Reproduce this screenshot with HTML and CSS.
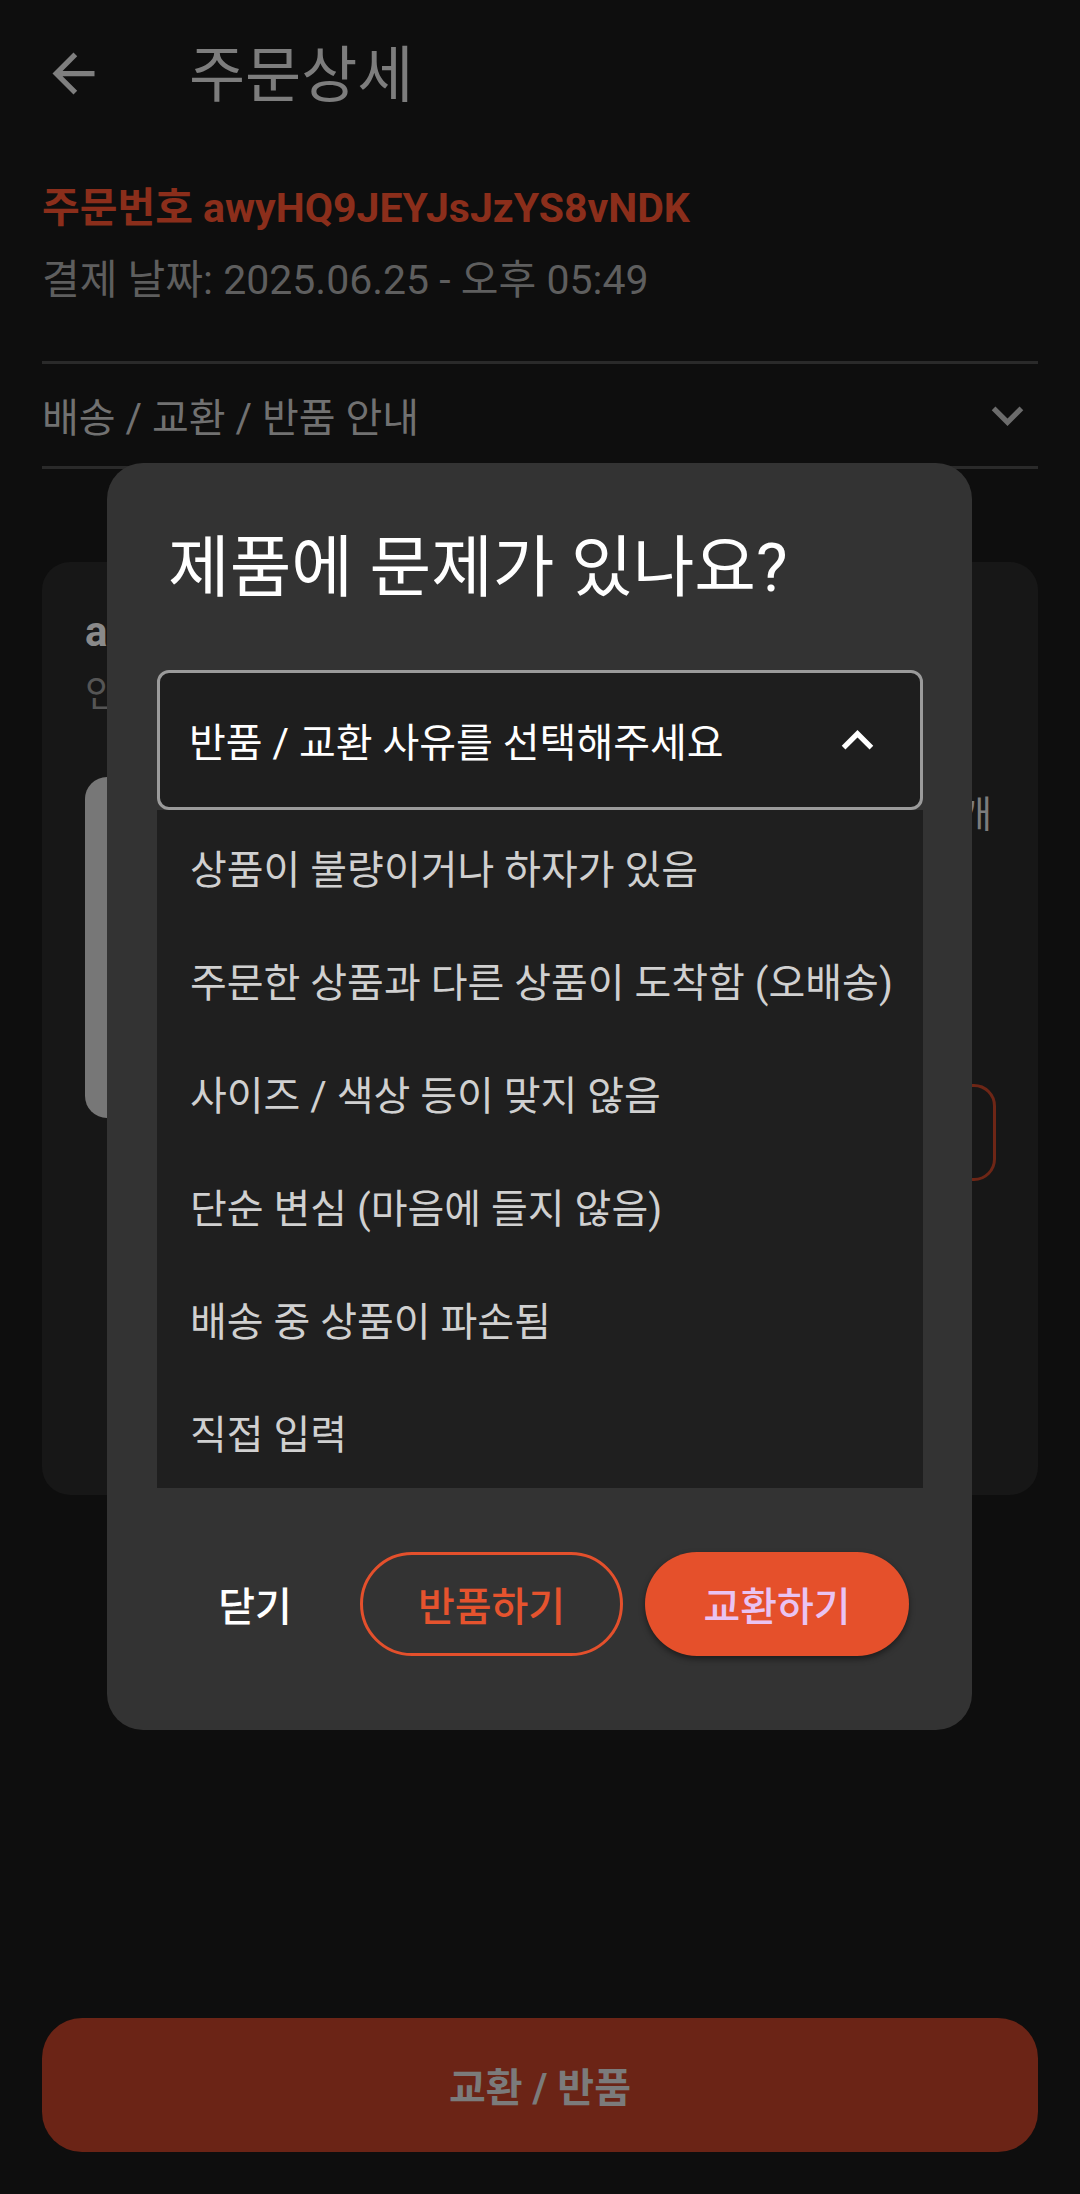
FILE: index.html
```html
<!DOCTYPE html>
<html lang="ko">
<head>
<meta charset="utf-8">
<title>주문상세</title>
<link rel="stylesheet" href="styles.css">
</head>
<body>
<div class="screen">
  <header class="appbar">
    <span class="icon-btn">
      <svg viewBox="0 0 24 24" width="63" height="63"><path fill="#7f7f7f" d="M20 11H7.83l5.59-5.59L12 4l-8 8 8 8 1.41-1.41L7.83 13H20v-2z"/></svg>
    </span>
    <h1 class="appbar-title">주문상세</h1>
  </header>

  <section class="order-info">
    <p class="order-no">주문번호 awyHQ9JEYJsJzYS8vNDK</p>
    <p class="order-date">결제 날짜: 2025.06.25 - 오후 05:49</p>
  </section>

  <div class="accordion">
    <span>배송 / 교환 / 반품 안내</span>
    <svg viewBox="0 0 24 24" width="63" height="63"><path fill="#6c6c6c" d="M16.59 8.59L12 13.17 7.41 8.59 6 10l6 6 6-6z"/></svg>
  </div>

  <article class="product-card">
    <p class="card-name">awyHQ9JEYJsJzYS8vNDK</p>
    <p class="card-sub">인기 상품</p>
    <div class="card-body">
      <div class="thumb"></div>
      <div class="card-info">
        <p class="qty">수량 1개</p>
        <span class="card-btn">교환 / 반품</span>
      </div>
    </div>
  </article>

  <button class="bottom-btn">교환 / 반품</button>
</div>

<div class="dialog">
  <h2 class="dialog-title">제품에 문제가 있나요?</h2>
  <div class="select">
    <span>반품 / 교환 사유를 선택해주세요</span>
    <svg viewBox="0 0 24 24" width="63" height="63"><path fill="#ffffff" d="M12 8l-6 6 1.41 1.41L12 10.83l4.59 4.58L18 14z"/></svg>
  </div>
  <ul class="menu">
    <li>상품이 불량이거나 하자가 있음</li>
    <li>주문한 상품과 다른 상품이 도착함 (오배송)</li>
    <li>사이즈 / 색상 등이 맞지 않음</li>
    <li>단순 변심 (마음에 들지 않음)</li>
    <li>배송 중 상품이 파손됨</li>
    <li>직접 입력</li>
  </ul>
  <div class="actions">
    <button class="btn btn-text">닫기</button>
    <button class="btn btn-outline">반품하기</button>
    <button class="btn btn-filled">교환하기</button>
  </div>
</div>
</body>
</html>
```

FILE: styles.css
```css
html, body {
  margin: 0;
  padding: 0;
  background: #0e0e0e;
}

body {
  font-family: Roboto, "Noto Sans CJK KR", sans-serif;
  width: 1080px;
  height: 2194px;
  overflow: hidden;
  position: relative;
}

p, h1, h2, ul {
  margin: 0;
  padding: 0;
}

.screen {
  min-height: 2194px;
  box-sizing: border-box;
  padding: 0 42px;
  display: flex;
  flex-direction: column;
}

/* App bar */
.appbar {
  display: flex;
  align-items: center;
  height: 63px;
  margin-top: 42px;
}

.icon-btn {
  display: flex;
  width: 63px;
  height: 63px;
}

.appbar-title {
  margin-left: 84px;
  margin-top: 6px;
  font-size: 61px;
  line-height: 63px;
  font-weight: 400;
  color: #7d7d7d;
}

/* Order info */
.order-info {
  margin-top: 75px;
}

.order-no {
  font-size: 41px;
  line-height: 56px;
  font-weight: 700;
  color: #8b2e1b;
}

.order-date {
  margin-top: 16px;
  font-size: 41px;
  line-height: 56px;
  color: #5e5e5e;
}

/* Accordion */
.accordion {
  margin-top: 53px;
  height: 102px;
  border-top: 3px solid #2a2a2a;
  border-bottom: 3px solid #2a2a2a;
  display: flex;
  align-items: center;
  justify-content: space-between;
  font-size: 40px;
  color: #717171;
}

.accordion svg {
  margin-right: -1px;
}

/* Background product card */
.product-card {
  margin-top: 93px;
  background: #171717;
  border-radius: 28px;
  padding: 42px 42px 314px 43px;
}

.card-name {
  font-size: 42px;
  line-height: 56px;
  font-weight: 700;
  color: #8a8a8a;
  white-space: nowrap;
  overflow: hidden;
}

.card-sub {
  margin-top: 10px;
  font-size: 37px;
  line-height: 50px;
  color: #555555;
}

.card-body {
  margin-top: 57px;
  display: flex;
  justify-content: space-between;
}

.thumb {
  width: 260px;
  height: 341px;
  background: #777777;
  border-radius: 22px;
}

.card-info {
  display: flex;
  flex-direction: column;
  align-items: flex-end;
}

.qty {
  margin-top: 20px;
  font-size: 37px;
  line-height: 37px;
  color: #7c7c7c;
  margin-right: 4px;
}

.card-btn {
  margin-top: 250px;
  height: 97px;
  width: 240px;
  box-sizing: border-box;
  border: 3px solid #6e2616;
  border-radius: 22px;
  display: flex;
  align-items: center;
  justify-content: center;
  font-size: 37px;
  color: #6e2616;
}

/* Bottom button */
.bottom-btn {
  margin-top: auto;
  margin-bottom: 42px;
  height: 134px;
  border: none;
  border-radius: 40px;
  background: #6b2416;
  color: #7b7b7b;
  font-family: Roboto, "Noto Sans CJK KR", sans-serif;
  font-size: 40px;
  font-weight: 700;
}

/* Dialog (overlay) */
.dialog {
  position: absolute;
  left: 107px;
  top: 463px;
  width: 865px;
  box-sizing: border-box;
  padding: 63px 49px 74px 50px;
  background: #333333;
  border-radius: 36px;
}

.dialog-title {
  padding: 0 11px;
  font-size: 67px;
  line-height: 84px;
  font-weight: 400;
  color: #ffffff;
}

.select {
  margin-top: 60px;
  height: 140px;
  box-sizing: border-box;
  border: 3px solid #9b9b9b;
  border-radius: 12px;
  background: #1e1e1e;
  display: flex;
  align-items: center;
  justify-content: space-between;
  padding: 0 31px 0 29px;
  font-size: 40px;
  color: #ffffff;
}

.menu {
  list-style: none;
  background: #1f1f1f;
}

.menu li {
  height: 113px;
  box-sizing: border-box;
  padding-left: 33px;
  display: flex;
  align-items: center;
  font-size: 40px;
  color: #d0d0d0;
}

.actions {
  margin-top: 64px;
  padding-right: 14px;
  display: flex;
  justify-content: flex-end;
  gap: 22px;
}

.btn {
  height: 104px;
  box-sizing: border-box;
  border: none;
  border-radius: 52px;
  background: transparent;
  font-family: Roboto, "Noto Sans CJK KR", sans-serif;
  font-size: 40px;
  font-weight: 500;
  padding: 0;
}

.btn-text {
  width: 166px;
  color: #ffffff;
}

.btn-outline {
  width: 263px;
  border: 3px solid #e4502c;
  color: #e5532e;
}

.btn-filled {
  width: 264px;
  background: #e5502b;
  color: #e9c3f2;
  box-shadow: 0 3px 6px rgba(0, 0, 0, 0.45);
}
```
